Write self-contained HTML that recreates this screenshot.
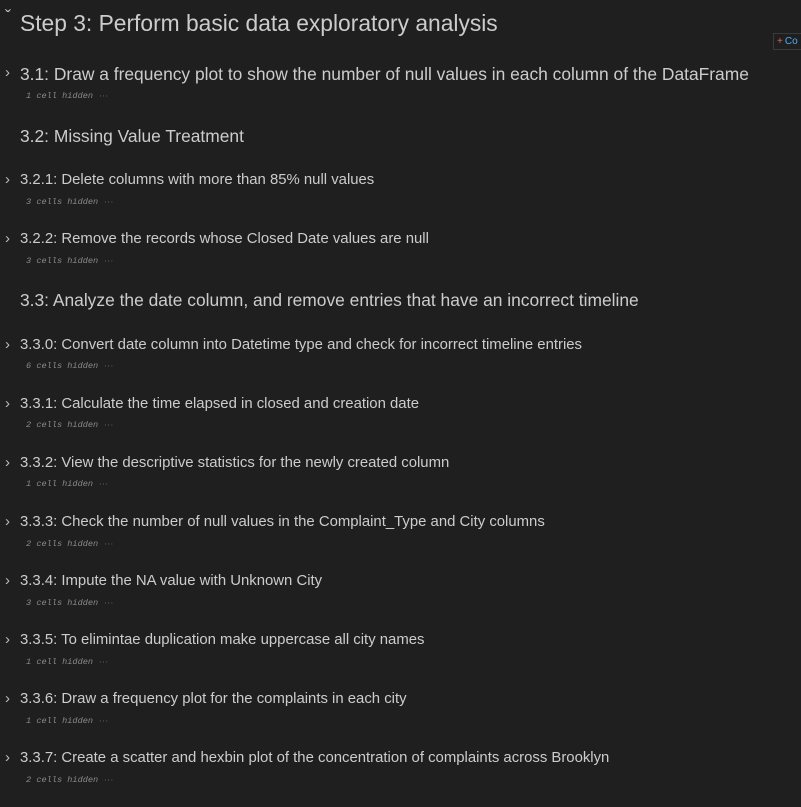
<!DOCTYPE html>
<html><head><meta charset="utf-8"><style>
body{margin:0;width:801px;height:807px;background:#1f1f1f;overflow:hidden;font-family:"Liberation Sans",sans-serif;color:#cccccc;position:relative}
.t{position:absolute;white-space:nowrap;left:20px;line-height:1}
.c{position:absolute;left:5px;color:#bbb;font-size:15px;line-height:1}
.h{position:absolute;left:26px;font-family:"Liberation Mono",monospace;font-style:italic;font-size:8.6px;color:#8a8a8a;white-space:nowrap;line-height:1}
.h i{font-style:normal;font-size:7px;letter-spacing:-1px;color:#666}
.h1{font-size:22.8px}
.h2{font-size:17.4px}
.h3{font-size:14.9px}
.btn{position:absolute;left:773px;top:33px;width:40px;height:15px;border:1px solid #3a3a3a;font-size:10px;color:#4daafc;line-height:15px}
.btn b{color:#e06060;font-weight:normal;margin:0 2px 0 3px}
</style></head><body>
<div class="c" style="top:8px;font-size:18px">ˇ</div>
<div class="t h1" style="top:12px">Step 3: Perform basic data exploratory analysis</div>
<div class="btn"><b>+</b>Co</div>

<div class="c" style="top:65px">›</div>
<div class="t h2" style="top:66px">3.1: Draw a frequency plot to show the number of null values in each column of the DataFrame</div>
<div class="h" style="top:92px">1 cell hidden <i>···</i></div>

<div class="t h2" style="top:128px">3.2: Missing Value Treatment</div>

<div class="c" style="top:172px">›</div>
<div class="t h3" style="top:173px">3.2.1: Delete columns with more than 85% null values</div>
<div class="h" style="top:198px">3 cells hidden <i>···</i></div>

<div class="c" style="top:231px">›</div>
<div class="t h3" style="top:232px">3.2.2: Remove the records whose Closed Date values are null</div>
<div class="h" style="top:257px">3 cells hidden <i>···</i></div>

<div class="t h2" style="top:292px">3.3: Analyze the date column, and remove entries that have an incorrect timeline</div>

<div class="c" style="top:337px">›</div>
<div class="t h3" style="top:338px">3.3.0: Convert date column into Datetime type and check for incorrect timeline entries</div>
<div class="h" style="top:362px">6 cells hidden <i>···</i></div>

<div class="c" style="top:396px">›</div>
<div class="t h3" style="top:397px">3.3.1: Calculate the time elapsed in closed and creation date</div>
<div class="h" style="top:421px">2 cells hidden <i>···</i></div>

<div class="c" style="top:455px">›</div>
<div class="t h3" style="top:456px">3.3.2: View the descriptive statistics for the newly created column</div>
<div class="h" style="top:480px">1 cell hidden <i>···</i></div>

<div class="c" style="top:514px">›</div>
<div class="t h3" style="top:515px">3.3.3: Check the number of null values in the Complaint_Type and City columns</div>
<div class="h" style="top:540px">2 cells hidden <i>···</i></div>

<div class="c" style="top:573px">›</div>
<div class="t h3" style="top:574px">3.3.4: Impute the NA value with Unknown City</div>
<div class="h" style="top:599px">3 cells hidden <i>···</i></div>

<div class="c" style="top:632px">›</div>
<div class="t h3" style="top:633px">3.3.5: To elimintae duplication make uppercase all city names</div>
<div class="h" style="top:658px">1 cell hidden <i>···</i></div>

<div class="c" style="top:691px">›</div>
<div class="t h3" style="top:692px">3.3.6: Draw a frequency plot for the complaints in each city</div>
<div class="h" style="top:717px">1 cell hidden <i>···</i></div>

<div class="c" style="top:750px">›</div>
<div class="t h3" style="top:751px">3.3.7: Create a scatter and hexbin plot of the concentration of complaints across Brooklyn</div>
<div class="h" style="top:776px">2 cells hidden <i>···</i></div>
</body></html>
